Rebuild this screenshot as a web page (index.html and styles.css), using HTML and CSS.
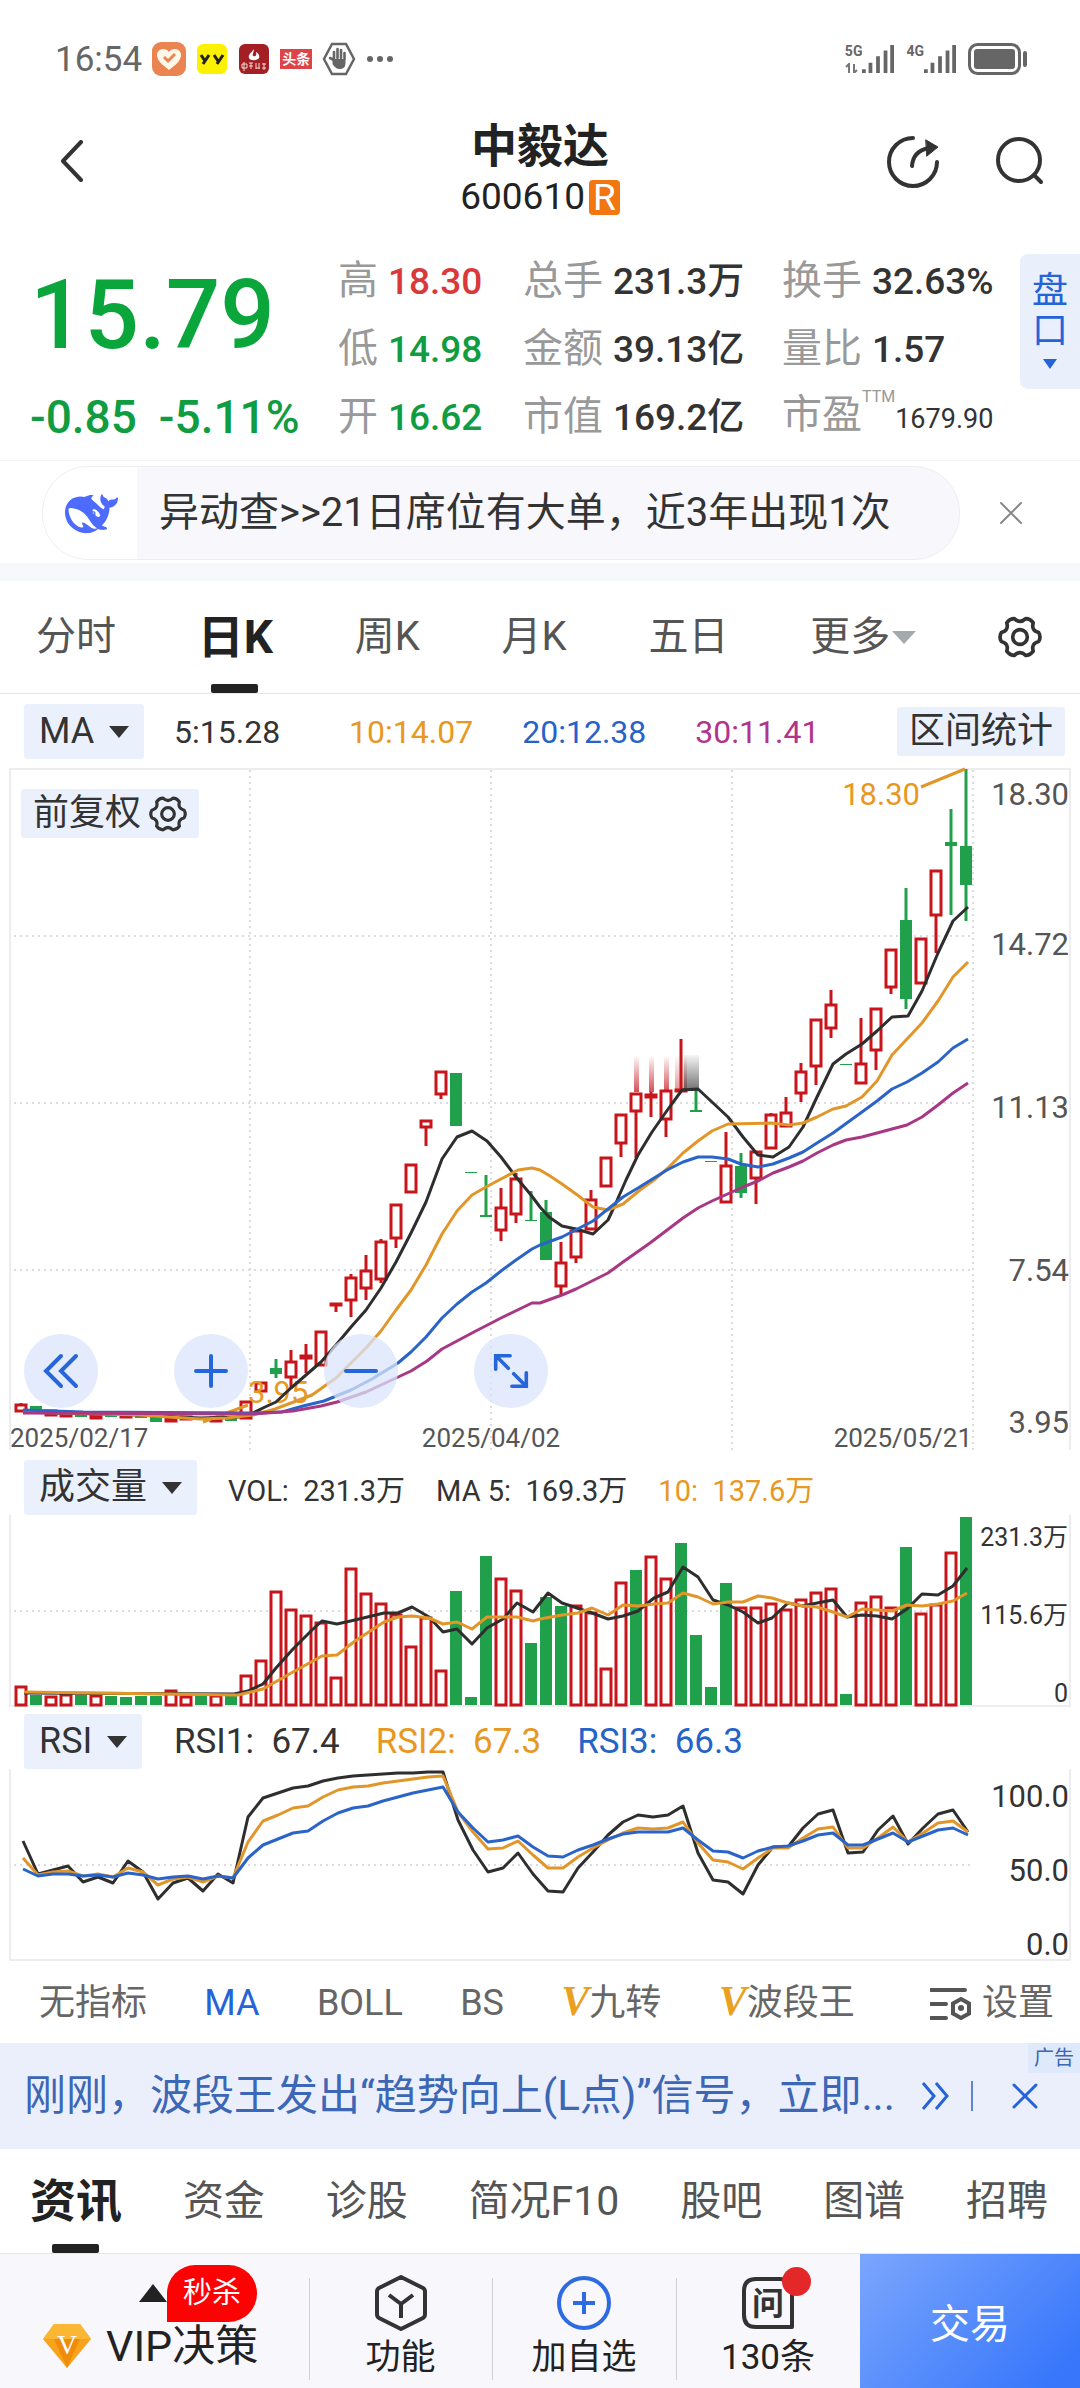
FILE: index.html
```html
<!DOCTYPE html>
<html lang="zh-CN">
<head>
  <meta charset="UTF-8" />
  <meta name="viewport" content="width=device-width, initial-scale=1.0"/>
  <title>中毅达 600610</title>
  <link rel="stylesheet" href="styles.css">
</head>
<body>
  <svg class="defs" aria-hidden="true">
    <symbol id="gear" viewBox="0 0 24 24">
      <path d="M22.2 9.6Q23.600 12 22.2 14.4Q18 15.500 19.2 19.7Q17.600 22 15.1 22Q12 19 8.9 22Q6.400 22 4.8 19.7Q6 15.500 1.8 14.4Q.4 12 1.8 9.6Q6 8.500 4.8 4.3Q6.400 2 8.9 2Q12 5 15.1 2Q17.600 2 19.2 4.3Q18 8.500 22.2 9.6Z"/>
      <circle cx="12" cy="12" r="4"/>
    </symbol>
  </svg>

  <div class="status-bar">
    <span class="clock">16:54</span>
    <svg class="app-icon" viewBox="0 0 34 34">
      <rect width="34" height="34" rx="9" fill="#ea8450"/>
      <path d="M17 28C9 22 5 18 5 13c0-7 9-8 12-3 3-5 12-4 12 3 0 5-4 9-12 15z" fill="#fff7ea"/>
      <path d="M12 15l4 4 7-7" fill="none" stroke="#ea8450" stroke-width="3"/>
    </svg>
    <svg class="app-icon small" viewBox="0 0 30 30">
      <rect width="30" height="30" rx="6" fill="#fdf000"/>
      <path d="M4 11l4 6M12 11l-6 9M17 11l4 6M26 11l-6 9" fill="none" stroke="#222" stroke-width="3"/>
    </svg>
    <svg class="app-icon small" viewBox="0 0 30 30">
      <rect width="30" height="30" rx="6" fill="#a31f24"/>
      <path d="M15 5c-4 5-6 6-5 9 1 3 8 3 10 0 1-3-1-5-3-6 1 4-1 5-3 4-1-2 1-4 1-7z" fill="#fff"/>
      <path d="M3 20h5v4H3zM5 18v9M10 19h4M10 22h4M12 19v6M17 19v6M20 19v6M17 24h4M23 20h4M23 24h4M25 19v7" fill="none" stroke="#f5d9d2" stroke-width="1"/>
    </svg>
    <span class="headline-icon">头条</span>
    <svg class="app-icon" viewBox="0 0 34 34" fill="none" stroke="#666">
      <path d="M10 2h14l8 15-8 15H10L2 17z" stroke-width="2.5"/>
      <path d="M12 18v-8M15.500 16V7M19 16V8M22.500 17v-6M12 18l-4-2" stroke-width="2.600" stroke-linecap="round"/>
      <path d="M10.500 17h13v4q0 6-6 6-4 0-7-5z" fill="#666" stroke="none"/>
    </svg>
    <svg class="more-dots" viewBox="0 0 28 8" fill="#666">
      <circle cx="4" cy="4" r="3"/><circle cx="14" cy="4" r="3"/><circle cx="24" cy="4" r="3"/>
    </svg>
    <div class="signals">
      <div class="signal">
        <span class="net">5G<svg viewBox="0 0 14 10"><path d="M1 4l3-3v9M9 1v9l3-3" fill="none" stroke="#777" stroke-width="2"/></svg></span>
        <svg class="bars" viewBox="0 0 34 32"><path d="M2 27v4M9 20v11M17 13v18M25 7v24M32 1v30"/></svg>
      </div>
      <div class="signal">
        <span class="net">4G</span>
        <svg class="bars" viewBox="0 0 34 32"><path d="M2 27v4M9 20v11M17 13v18M25 7v24M32 1v30"/></svg>
      </div>
      <svg class="battery" viewBox="0 0 60 32">
        <rect x="1.500" y="1.500" width="50" height="29" rx="8" fill="none" stroke="#666" stroke-width="3"/>
        <rect x="6" y="6" width="41" height="20" rx="3" fill="#666"/>
        <rect x="55" y="8" width="4" height="16" rx="2" fill="#666"/>
      </svg>
    </div>
  </div>

  <header class="header">
    <button class="icon-btn back" aria-label="返回">
      <svg viewBox="0 0 24 42"><path d="M21 2L3 21l18 19"/></svg>
    </button>
    <div class="title">
      <h1>中毅达</h1>
      <p>600610<span class="tag-r">R</span></p>
    </div>
    <div class="header-actions">
      <button class="icon-btn" aria-label="分享">
        <svg viewBox="0 0 54 54"><path d="M27 3A24 24 0 1 0 51 27M26 31q1-15 17-18"/><path d="M40 5l12 7-11 9z" fill="#333" stroke-width="1"/></svg>
      </button>
      <button class="icon-btn" aria-label="搜索">
        <svg viewBox="0 0 54 54"><circle cx="27" cy="25" r="21"/><path d="M42 40l7 7"/></svg>
      </button>
    </div>
  </header>

  <section class="quote">
    <div class="quote-grid">
      <div class="price">15.79</div>
      <div class="item">高 <b class="up">18.30</b></div>
      <div class="item">总手 <b>231.3万</b></div>
      <div class="item">换手 <b>32.63%</b></div>
      <div class="item">低 <b class="down">14.98</b></div>
      <div class="item">金额 <b>39.13亿</b></div>
      <div class="item">量比 <b>1.57</b></div>
      <div class="change"><span>-0.85</span><span>-5.11%</span></div>
      <div class="item">开 <b class="down">16.62</b></div>
      <div class="item">市值 <b>169.2亿</b></div>
      <div class="item pe">市盈<sup>TTM</sup><b>1679.90</b></div>
    </div>
    <button class="order-book">盘<br>口<i class="caret"></i></button>
  </section>

  <section class="notice">
    <a class="notice-pill" href="#">
      <span class="notice-logo">
        <svg viewBox="0 3 24 18"><path fill="#4d6bfe" d="M23.748 4.482c-.254-.124-.364.113-.512.234-.051.039-.094.09-.137.136-.372.397-.806.657-1.373.626-.829-.046-1.537.214-2.163.848-.133-.782-.575-1.248-1.247-1.548-.352-.156-.708-.311-.955-.65-.172-.241-.219-.51-.305-.774-.055-.16-.11-.323-.293-.35-.2-.031-.278.136-.356.276-.313.572-.434 1.202-.422 1.84.027 1.436.633 2.58 1.838 3.393.137.093.172.187.129.323-.082.28-.18.552-.266.833-.055.179-.137.217-.329.14a5.526 5.526 0 01-1.736-1.18c-.857-.828-1.631-1.742-2.597-2.458a11.365 11.365 0 00-.689-.471c-.985-.957.13-1.743.388-1.836.27-.098.093-.432-.779-.428-.872.004-1.67.295-2.687.684a3.055 3.055 0 01-.465.137 9.597 9.597 0 00-2.883-.102c-1.885.21-3.39 1.102-4.497 2.623C.082 8.606-.231 10.684.152 12.85c.403 2.284 1.569 4.175 3.36 5.653 1.858 1.533 3.997 2.284 6.438 2.14 1.482-.085 3.133-.284 4.994-1.86.47.234.962.327 1.78.397.63.059 1.236-.03 1.705-.128.735-.156.684-.837.419-.961-2.155-1.004-1.682-.595-2.113-.926 1.096-1.296 2.746-2.642 3.392-7.003.05-.347.007-.565 0-.845-.004-.17.035-.237.23-.256a4.173 4.173 0 001.545-.475c1.396-.763 1.96-2.015 2.093-3.517.02-.23-.004-.467-.247-.588zM11.581 18c-2.089-1.642-3.102-2.183-3.52-2.16-.392.024-.321.471-.235.763.09.288.207.486.371.739.114.167.192.416-.113.603-.673.416-1.842-.14-1.897-.167-1.361-.802-2.5-1.86-3.301-3.307-.774-1.393-1.224-2.887-1.298-4.482-.02-.386.093-.522.477-.592a4.696 4.696 0 011.529-.039c2.132.312 3.946 1.265 5.468 2.774.868.86 1.525 1.887 2.202 2.891.72 1.066 1.494 2.082 2.48 2.914.348.292.625.514.891.677-.802.09-2.14.11-3.054-.614zm1-6.44a.306.306 0 01.415-.287.302.302 0 01.2.288.306.306 0 01-.31.307.303.303 0 01-.304-.308zm3.11 1.596c-.2.081-.399.151-.59.16a1.245 1.245 0 01-.798-.254c-.274-.23-.47-.358-.552-.758a1.73 1.73 0 01.016-.588c.07-.327-.008-.537-.239-.727-.187-.156-.426-.199-.688-.199a.559.559 0 01-.254-.078c-.11-.114-.2-.391-.111-.549.028-.054.16-.186.192-.21.356-.202.767-.136 1.146.016.352.144.618.408 1.001.782.391.451.462.576.685.914.176.265.336.537.445.848.067.195-.019.354-.25.452z"/></svg>
      </span>
      <span class="notice-text">异动查&gt;&gt;21日席位有大单，近3年出现1次</span>
    </a>
    <button class="icon-btn notice-close" aria-label="关闭">
      <svg viewBox="0 0 22 22"><path d="M1 1l20 20M21 1L1 21"/></svg>
    </button>
  </section>

  <nav class="tabs period-tabs">
    <a href="#">分时</a>
    <a href="#" class="active">日K</a>
    <a href="#">周K</a>
    <a href="#">月K</a>
    <a href="#">五日</a>
    <button aria-haspopup="true">更多<i class="caret"></i></button>
    <button class="icon-btn" aria-label="图表设置"><svg class="gear"><use href="#gear"/></svg></button>
  </nav>

  <div class="pane-head main-head">
    <span class="picker"><select aria-label="主图指标"><option>MA</option></select></span>
    <div class="legend ma-legend">
      <span>5:15.28</span>
      <span class="orange">10:14.07</span>
      <span class="blue">20:12.38</span>
      <span class="purple">30:11.41</span>
    </div>
    <button class="chip">区间统计</button>
  </div>

  <div class="chart">
    <svg id="kline" viewBox="0 0 1080 682"></svg>
    <button class="chip adjust">前复权<svg class="gear"><use href="#gear"/></svg></button>
    <div class="chart-tools">
      <button aria-label="向左"><svg viewBox="0 0 36 36"><path d="M18 3L3 18l15 15M33 3L18 18l15 15"/></svg></button>
      <button aria-label="放大"><svg viewBox="0 0 36 36"><path d="M18 3v30M3 18h30"/></svg></button>
      <button aria-label="缩小"><svg viewBox="0 0 36 36"><path d="M3 18h30"/></svg></button>
      <button aria-label="全屏"><svg viewBox="0 0 40 40"><path d="M3 18V3h16M4 4l13 13M37 22v15H21M36 36L23 23"/></svg></button>
    </div>
  </div>

  <div class="pane-head">
    <span class="picker"><select aria-label="成交量指标"><option>成交量</option></select></span>
    <div class="legend vol-legend">
      <span>VOL:&nbsp; 231.3万</span>
      <span>MA 5:&nbsp; 169.3万</span>
      <span class="orange">10:&nbsp; 137.6万</span>
    </div>
  </div>
  <svg class="pane" id="volume" viewBox="0 0 1080 192"></svg>

  <div class="pane-head rsi-head">
    <span class="picker"><select aria-label="副图指标"><option>RSI</option></select></span>
    <div class="legend rsi-legend">
      <span>RSI1:&nbsp; 67.4</span>
      <span class="orange">RSI2:&nbsp; 67.3</span>
      <span class="blue">RSI3:&nbsp; 66.3</span>
    </div>
  </div>
  <svg class="pane" id="rsi" viewBox="0 0 1080 192"></svg>

  <nav class="indicators">
    <a href="#">无指标</a>
    <a href="#" class="active">MA</a>
    <a href="#">BOLL</a>
    <a href="#">BS</a>
    <a href="#"><i class="v">V</i>九转</a>
    <a href="#"><i class="v">V</i>波段王</a>
    <a href="#" class="settings">
      <svg viewBox="0 0 42 34"><path d="M1 3h34M1 17h15M1 31h15M31 12l8 4.500v10L31 31l-8-4.500v-10z"/><circle cx="31" cy="21" r="3" fill="#555" stroke="none"/></svg>设置
    </a>
  </nav>

  <aside class="ad">
    <a href="#">刚刚，波段王发出“趋势向上(L点)”信号，立即...</a>
    <svg class="ad-more" viewBox="0 0 28 30"><path d="M2 2l11 13L2 28M15 2l11 13-11 13"/></svg>
    <span class="ad-line"></span>
    <button class="icon-btn" aria-label="关闭广告"><svg viewBox="0 0 26 26"><path d="M2 2l22 22M24 2L2 24"/></svg></button>
    <span class="ad-tag">广告</span>
  </aside>

  <nav class="tabs info-tabs">
    <a href="#" class="active">资讯</a>
    <a href="#">资金</a>
    <a href="#">诊股</a>
    <a href="#">简况F10</a>
    <a href="#">股吧</a>
    <a href="#">图谱</a>
    <a href="#">招聘</a>
  </nav>

  <footer class="bottom-bar">
    <button class="vip">
      <span class="vip-top"><i class="caret"></i><span class="sale">秒杀</span></span>
      <span class="vip-main">
        <svg viewBox="0 0 50 46">
          <path d="M12 1h26l11 15-24 29L1 16z" fill="#f8a31c"/>
          <path d="M12 1h26l11 15H1z" fill="#fbb634"/>
          <path d="M25 45L12 16h26z" fill="#f08c0c"/>
          <text x="25" y="31" text-anchor="middle">V</text>
        </svg>VIP决策
      </span>
    </button>
    <button class="item-btn">
      <svg viewBox="0 0 54 58"><path d="M27 3l22 11q2 1 2 4v22q0 3-2 4L27 55 5 44q-2-1-2-4V18q0-3 2-4zM15 21l12 9 12-9M27 30v14"/></svg>
      功能
    </button>
    <button class="item-btn add">
      <svg viewBox="0 0 54 58"><circle cx="27" cy="29" r="25"/><path d="M27 18v22M16 29h22"/></svg>
      加自选
    </button>
    <button class="item-btn ask">
      <svg viewBox="0 0 54 58"><path d="M15 5h24q12 0 12 12v36H15Q3 53 3 41V17Q3 5 15 5z"/><text x="27" y="41" text-anchor="middle">问</text></svg>
      130条
    </button>
    <button class="trade">交易</button>
  </footer>

  <script src="chart.js"></script>
</body>
</html>
```
FILE: styles.css
```css
* {
  box-sizing: border-box;
}

body {
  margin: 0;
  background: #fff;
  color: #333;
  font-family: Roboto, "Noto Sans CJK SC", sans-serif;
  font-size: 40px;
}

h1, p {
  margin: 0;
}

a {
  color: inherit;
  text-decoration: none;
}

button, select {
  font: inherit;
  color: inherit;
  background: none;
  border: 0;
  margin: 0;
  padding: 0;
  cursor: pointer;
}

svg {
  display: block;
}

.defs {
  width: 0;
  height: 0;
  position: absolute;
}

.orange { color: #e8981f; }
.blue { color: #2563c9; }
.purple { color: #b3328c; }
.up { color: #d9393a; }
.down { color: #109c40; }

.caret {
  display: inline-block;
  border: 9px solid transparent;
  border-top: 12px solid currentColor;
  border-bottom: 0;
}

.icon-btn svg {
  fill: none;
  stroke: #333;
  stroke-width: 4;
  stroke-linecap: round;
  stroke-linejoin: round;
}

.gear {
  fill: none;
  stroke: #333;
  stroke-width: 2;
  stroke-linejoin: round;
}

/* status bar */
.status-bar {
  display: flex;
  align-items: center;
  gap: 10px;
  padding: 39px 52px 0 55px;
  height: 79px;
  color: #666;
}

.clock {
  font-size: 35px;
}

.app-icon {
  width: 34px;
  height: 34px;
}

.app-icon.small {
  width: 32px;
  height: 30px;
}

.headline-icon {
  background: #dd4347;
  color: #fff;
  font-size: 14px;
  font-weight: bold;
  line-height: 20px;
  padding: 0 2px;
}

.more-dots {
  width: 28px;
  height: 8px;
}

.signals {
  display: flex;
  align-items: center;
  gap: 12px;
  margin-left: auto;
}

.signal {
  display: flex;
}

.net {
  font-size: 14px;
  font-weight: bold;
  line-height: 16px;
}

.net svg {
  width: 14px;
  height: 10px;
  margin-top: 4px;
}

.bars {
  width: 32px;
  height: 32px;
  stroke: #666;
  stroke-width: 4;
}

.battery {
  width: 60px;
  height: 32px;
}

/* header */
.header {
  display: grid;
  grid-template-columns: 1fr auto 1fr;
  align-items: start;
  padding: 40px 34px 30px 60px;
}

.back {
  justify-self: start;
  padding-top: 21px;
}

.back svg {
  width: 24px;
  height: 42px;
}

.title {
  text-align: center;
  color: #222;
  padding-right: 26px;
}

.title h1 {
  font-size: 46px;
  line-height: 54px;
}

.title p {
  display: flex;
  justify-content: center;
  align-items: center;
  gap: 4px;
  font-size: 37px;
  line-height: 40px;
  margin-top: 4px;
}

.tag-r {
  background: #f27710;
  color: #fff;
  border-radius: 4px;
  line-height: 35px;
  padding: 0 4px;
}

.header-actions {
  display: flex;
  justify-content: flex-end;
  gap: 52px;
  padding-top: 16px;
}

.header-actions svg {
  width: 54px;
  height: 54px;
}

/* quote */
.quote {
  display: flex;
  align-items: flex-start;
  padding-bottom: 9px;
}

.quote-grid {
  flex: 1;
  display: grid;
  grid-template-columns: 308fr 185fr 259fr 238fr;
  grid-auto-rows: 68px;
  align-items: center;
  padding-left: 30px;
}

.price {
  grid-row: span 2;
  color: #0aa63c;
  font-size: 96px;
  font-weight: 500;
}

.change {
  display: flex;
  gap: 22px;
  color: #109c40;
  font-size: 46px;
  font-weight: 500;
}

.item {
  color: #999;
  line-height: 48px;
  white-space: nowrap;
}

.item b {
  color: #333;
  font-size: 37px;
  font-weight: 500;
}

.item b.up { color: #d9393a; }
.item b.down { color: #109c40; }

.pe sup {
  font-size: 16px;
  line-height: 0;
  vertical-align: 26px;
}

.item.pe b {
  font-size: 27px;
  font-weight: 400;
}

.order-book {
  width: 60px;
  margin-top: 7px;
  padding: 17px 0 20px;
  background: #e9f0fc;
  color: #2563d9;
  font-size: 36px;
  line-height: 40px;
  border-radius: 8px 0 0 8px;
}

.order-book .caret {
  display: block;
  width: 0;
  margin: 8px auto 0;
  border-width: 10px 7px 0;
}

/* notice */
.notice {
  display: flex;
  align-items: center;
  padding: 5px 58px 3px 42px;
  border-top: 1px solid #f4f4f7;
  border-bottom: 18px solid #f7f8fc;
}

.notice-pill {
  flex: 1;
  display: flex;
  align-items: center;
  border: 1px solid #ededf3;
  border-radius: 46px;
  background: #f7f7fc;
  overflow: hidden;
  margin-right: 40px;
}

.notice-logo {
  background: #fff;
  padding: 27px 19px 25px 22px;
}

.notice-logo svg {
  width: 53px;
  height: 40px;
}

.notice-text {
  padding-left: 22px;
  font-size: 40px;
  line-height: 46px;
}

.notice-close svg {
  width: 22px;
  height: 22px;
  stroke: #888;
  stroke-width: 2;
}

/* tabs */
.tabs {
  display: flex;
  justify-content: space-between;
  align-items: center;
  color: #555;
  border-bottom: 1px solid #e6e6e6;
}

.tabs .active {
  position: relative;
  color: #222;
  font-size: 46px;
  font-weight: bold;
}

.tabs .active::after {
  content: "";
  position: absolute;
  left: 50%;
  bottom: 0;
  width: 47px;
  height: 9px;
  margin-left: -24px;
  border-radius: 2px;
  background: #222;
}

.period-tabs {
  padding: 0 38px 0 36px;
  line-height: 112px;
}

.period-tabs .caret {
  color: #a4a9ad;
  margin-left: 2px;
  margin-bottom: 6px;
  border-width: 13px 12px 0;
}

.period-tabs .gear {
  width: 44px;
  height: 44px;
  stroke-width: 2;
}

/* chart panes */
.pane-head {
  display: flex;
  align-items: center;
  padding: 10px 15px 0 24px;
}

.main-head {
  padding-bottom: 9px;
}

.rsi-head {
  padding-top: 7px;
}

.picker {
  position: relative;
  background: #eaf1fd;
  border-radius: 3px;
}

.picker::after {
  content: "";
  position: absolute;
  right: 15px;
  top: 22px;
  border: 10px solid transparent;
  border-top: 12px solid #333;
  border-bottom: 0;
  pointer-events: none;
}

.picker select {
  display: block;
  appearance: none;
  font-size: 36px;
  line-height: 55px;
  height: 55px;
  padding: 0 49px 0 15px;
}

.legend {
  display: flex;
  white-space: nowrap;
}

.ma-legend {
  flex: 1;
  margin-left: 30px;
  font-size: 32px;
  gap: 49px;
}

.ma-legend span:first-child {
  margin-right: 20px;
}

.vol-legend {
  margin-left: 31px;
  font-size: 29px;
  gap: 31px;
}

.rsi-legend {
  margin-left: 32px;
  font-size: 35px;
  gap: 36px;
}

.chip {
  background: #eaf1fd;
  border-radius: 3px;
  font-size: 36px;
  line-height: 49px;
  padding: 0 12px;
}

.chart {
  position: relative;
}

.chart > svg, .pane {
  width: 100%;
  height: auto;
  overflow: visible;
}

.adjust {
  position: absolute;
  left: 21px;
  top: 21px;
  display: flex;
  align-items: center;
  gap: 8px;
}

.adjust .gear {
  width: 38px;
  height: 38px;
}

.chart-tools {
  position: absolute;
  left: 24px;
  bottom: 42px;
  display: flex;
  gap: 76px;
}

.chart-tools button {
  display: grid;
  place-items: center;
  width: 74px;
  height: 74px;
  border-radius: 50%;
  background: rgba(217, 228, 251, 0.75);
}

.chart-tools svg {
  width: 36px;
  height: 36px;
  fill: none;
  stroke: #2765da;
  stroke-width: 4;
  stroke-linecap: round;
}

/* svg parts, classes are set in chart.js */
.frame { fill: none; stroke: #ededf0; stroke-width: 2; }
.grid { stroke: #dcdce0; stroke-width: 2; stroke-dasharray: 2 4; }
.rise { fill: #fff; stroke: #c8141b; stroke-width: 3; }
.fall { fill: #20a04b; stroke: none; }
.wick-rise { stroke: #c8141b; stroke-width: 3; }
.wick-fall { stroke: #20a04b; stroke-width: 3; }
.line { fill: none; stroke-width: 3; stroke-linejoin: round; }
.line-black { stroke: #2e2e2e; }
.line-orange { stroke: #e2962a; }
.line-blue { stroke: #2a64c8; }
.line-purple { stroke: #a83784; }
.axis { fill: #555; font-size: 31px; }
.axis-dark { fill: #333; font-size: 31px; }
.axis-small { fill: #333; font-size: 25px; }
.date { fill: #555; font-size: 26px; }
.mark { fill: #e8981f; font-size: 31px; }

/* indicators */
.indicators {
  display: flex;
  justify-content: space-between;
  align-items: center;
  padding: 3px 26px 0 39px;
  font-size: 36px;
  line-height: 79px;
  color: #666;
}

.indicators .active {
  color: #2563d9;
}

.v {
  color: #e9a11f;
  font-family: "Liberation Serif", serif;
  font-size: 42px;
  font-weight: bold;
  line-height: 40px;
}

.settings {
  display: flex;
  align-items: center;
  gap: 10px;
  margin-left: 18px;
}

.settings svg {
  width: 42px;
  height: 34px;
  fill: none;
  stroke: #555;
  stroke-width: 4;
  stroke-linecap: round;
}

/* ad */
.ad {
  position: relative;
  display: flex;
  align-items: center;
  padding: 0 42px 0 24px;
  background: #ebeffb;
  color: #3c66b6;
  line-height: 106px;
  font-size: 42px;
}

.ad a {
  flex: 1;
  overflow: hidden;
  white-space: nowrap;
}

.ad svg {
  fill: none;
  stroke: #2563d9;
  stroke-width: 3;
}

.ad-more {
  width: 28px;
  height: 30px;
}

.ad-line {
  width: 2px;
  height: 30px;
  margin: 0 39px 0 22px;
  background: #5f84d0;
}

.ad .icon-btn svg {
  width: 26px;
  height: 26px;
}

.ad-tag {
  position: absolute;
  right: 0;
  top: 0;
  padding: 0 6px;
  background: #dfe9fc;
  font-size: 20px;
  line-height: 30px;
}

.info-tabs {
  padding: 0 32px 0 30px;
  font-size: 41px;
  line-height: 104px;
}

/* bottom bar */
.bottom-bar {
  display: grid;
  grid-template-columns: 309fr 183fr 184fr 184fr 220fr;
  background: #f7f7fc;
  color: #222;
}

.vip {
  padding: 10px 0 18px 42px;
}

.vip-top {
  display: flex;
  align-items: center;
  padding-left: 97px;
}

.vip-top .caret {
  border-width: 0 14px 18px;
  border-bottom: 18px solid #222;
}

.sale {
  background: #fc0203;
  color: #fff;
  font-size: 29px;
  line-height: 57px;
  padding: 0 16px;
  border-radius: 29px 29px 29px 0;
}

.vip-main {
  display: flex;
  align-items: center;
  gap: 14px;
  font-size: 43px;
  line-height: 48px;
}

.vip-main svg {
  width: 50px;
  height: 46px;
  fill: #fff;
  font-family: "Liberation Serif", serif;
  font-size: 28px;
}

.item-btn {
  position: relative;
  padding: 20px 0 6px;
  font-size: 35px;
  line-height: 48px;
}

.item-btn::before {
  content: "";
  position: absolute;
  left: 0;
  top: 24px;
  bottom: 8px;
  border-left: 1px solid #d0d0d6;
}

.item-btn svg {
  width: 54px;
  height: 58px;
  margin: 0 auto 2px;
  fill: none;
  stroke: #333;
  stroke-width: 4;
  stroke-linejoin: round;
}

.item-btn.add svg {
  stroke: #2e6be0;
}

.item-btn text {
  fill: #333;
  stroke: none;
  font-size: 32px;
  font-weight: bold;
}

.ask::after {
  content: "";
  position: absolute;
  top: 13px;
  left: 50%;
  margin-left: 14px;
  width: 29px;
  height: 29px;
  border-radius: 50%;
  background: #e42728;
}

.trade {
  color: #fff;
  background: linear-gradient(135deg, #7ba6fd, #3877fb 90%);
}
```
FILE: chart.js
```js
const STEP = 15;
const X0 = 21;

// [rise or fall, high, body top, body bottom, low]
const candles = [
  ["r",635,637,643,643],["f",638,638,643,643],["r",643,643,647,647],["r",643,644,648,648],
  ["f",645,645,649,649],["r",646,647,650,650],["f",645,645,649,649],["r",646,647,649,649],
  ["f",646,646,650,650],["f",648,648,654,654],["r",649,650,653,653],["r",649,649,651,651],
  ["f",649,649,652,652],["r",650,650,653,653],["f",649,649,653,653],["r",633,634,650,651],
  ["r",614,615,623,624],["f",591,600,606,610],["r",582,594,609,620],["r",576,588,590,605],
  ["r",563,564,597,597],["r",535,536,537,544],["r",506,510,532,549],["r",487,503,520,532],
  ["r",471,474,511,515],["r",436,437,470,480],["r",396,397,424,425],["r",352,353,359,378],
  ["r",303,304,326,331],["f",305,305,358,358],["f",405,404,405,405],["f",407,447,449,449],
  ["r",420,440,462,473],["r",405,411,446,455],["f",423,452,453,453],["f",432,444,492,492],
  ["r",474,495,518,527],["r",462,463,489,495],["r",422,432,461,462],["r",389,390,418,419],
  ["r",346,347,375,389],["r",325,326,343,390],["r",324,327,329,349],["r",322,323,351,369],
  ["r",271,322,323,323],["f",322,342,344,344],["f",394,393,394,394],["r",364,398,434,434],
  ["f",385,398,425,430],["r",383,384,410,436],["r",345,347,380,380],["r",329,345,358,358],
  ["r",295,304,325,334],["r",251,252,298,317],["r",222,237,260,270],["f",296,296,297,297],
  ["r",250,296,315,316],["r",240,241,282,302],["r",181,182,219,226],["f",120,152,231,241],
  ["r",170,171,215,215],["r",102,103,147,185],["f",41,74,78,147],["f",1,78,117,153]
];

const ma5 = "23,644 138,647 200,650 238,649 253,645 265,639 276,634 291,620 306,607 321,594 336,577 351,559 366,542 381,520 396,494 411,465 426,434 442,391 457,369 472,363 487,373 501,389 516,409 531,427 540,439 549,449 562,458 576,461 593,466 608,452 615,437 626,412 638,387 652,364 666,344 682,322 698,321 712,334 728,349 743,369 758,387 773,389 789,379 803,359 817,329 833,296 846,286 862,276 877,263 892,249 908,248 922,223 938,185 953,153 968,139";
const ma10 = "23,644 138,647 200,651 227,650 253,647 275,641 291,635 312,627 336,610 351,595 366,580 381,563 396,542 411,522 426,497 442,466 457,443 472,427 486,419 501,411 518,402 532,400 540,402 550,408 562,416 576,426 593,439 608,442 623,436 640,422 654,412 668,400 683,385 698,373 712,363 728,356 771,355 789,357 803,355 817,349 833,341 846,338 862,329 877,313 892,287 907,271 922,255 938,233 953,209 968,194";
const ma20 = "23,642 83,644 253,645 282,644 303,638 324,633 351,622 372,611 398,595 411,584 426,569 442,550 457,536 472,524 486,515 501,503 516,492 532,481 540,477 562,469 593,453 608,441 623,429 638,420 667,402 683,394 698,389 712,389 728,391 741,396 758,399 773,396 789,390 803,384 817,375 833,365 862,344 877,333 892,321 907,314 922,305 938,294 953,280 968,271";
const ma30 = "23,645 253,646 293,643 321,638 337,634 366,624 396,610 411,603 427,593 442,581 472,565 501,550 532,535 540,535 562,527 576,521 608,505 623,494 650,475 683,450 698,440 712,433 743,419 758,413 773,405 789,399 803,393 817,385 833,377 846,372 862,369 892,361 907,357 922,349 938,337 953,325 968,315";

const volTops = [172,180,182,180,180,181,181,182,181,181,176,182,181,181,181,161,146,77,95,101,108,163,54,79,89,100,132,103,156,76,182,41,64,76,128,82,91,91,98,154,68,55,42,64,28,120,172,68,93,93,89,95,85,78,74,179,88,82,93,32,99,90,38,2];
const volKinds = "rfrrfrffffrrfrfrrrrrrrrrrrrrrfffrrfffrrrrfrrffffrrrrrrrfrrrfrrrf";
const vol5 = "24,178 234,179 248,176 263,169 276,153 293,134 312,115 322,106 337,109 355,105 384,98 398,98 412,92 429,102 443,117 457,114 472,129 487,113 503,104 517,88 533,97 548,78 562,88 592,98 608,104 623,101 638,96 654,83 668,77 683,52 698,62 713,85 728,90 743,97 758,108 772,103 788,88 803,91 817,88 833,85 847,102 862,100 877,101 892,104 907,94 922,79 938,80 953,71 967,53";
const vol10 = "24,177 238,180 263,174 293,157 322,141 337,140 355,126 384,107 398,102 412,101 429,103 443,109 457,107 472,114 487,102 517,102 533,106 540,104 562,100 578,98 592,93 608,100 623,90 638,91 654,89 668,88 683,78 698,82 713,89 728,87 743,87 758,81 772,83 788,88 803,91 817,92 833,97 847,102 862,94 892,96 907,90 922,91 938,89 953,86 967,78";

const rsi1 = [72,105,101,97,113,108,114,92,103,130,114,109,122,105,114,48,29,24,19,17,12,9,7,6,5,4,4,3,3,51,81,103,99,84,105,122,123,99,83,66,53,46,48,46,37,84,111,113,125,96,78,78,59,45,41,84,83,61,47,75,59,45,41,63];
const rsi2 = [89,106,103,102,107,105,108,99,103,116,110,108,113,107,109,73,52,46,39,37,28,21,18,17,14,12,10,8,7,43,63,80,79,72,86,99,99,88,79,71,64,59,60,59,53,74,91,93,100,89,79,79,69,60,58,79,79,69,58,73,64,54,52,63];
const rsi3 = [100,107,105,105,107,106,108,104,106,110,108,107,110,107,109,89,76,70,64,62,52,44,39,37,32,28,24,21,18,43,59,73,71,67,78,87,88,81,76,70,65,63,63,63,59,71,82,83,89,82,78,77,72,66,64,76,76,70,64,73,67,61,59,66];

function line(x1, y1, x2, y2, cls) {
  return `<line class="${cls}" x1="${x1}" y1="${y1}" x2="${x2}" y2="${y2}"/>`;
}

function bar(kind, x, top, bottom) {
  if (kind === "r") {
    return `<rect class="rise" x="${x - 5}" y="${top}" width="10" height="${Math.max(bottom - top, 1)}"/>`;
  }
  return `<rect class="fall" x="${x - 6}" y="${top}" width="12" height="${Math.max(bottom - top, 1)}"/>`;
}

function curve(points, color) {
  return `<polyline class="line line-${color}" points="${points}"/>`;
}

function series(values) {
  return values.map((y, i) => (X0 + 2 + i * STEP) + "," + y).join(" ");
}

function label(x, y, text, cls, anchor) {
  return `<text class="${cls}" x="${x}" y="${y}" text-anchor="${anchor || "end"}">${text}</text>`;
}

function drawKline() {
  let s = `<path class="frame" d="M10 682V1H1070V682"/>`;
  [250, 491, 732, 973].forEach(x => s += line(x, 2, x, 682, "grid"));
  [168, 335, 502].forEach(y => s += line(14, y, 973, y, "grid"));

  candles.forEach((c, i) => {
    const x = X0 + i * STEP;
    const [kind, high, top, bottom, low] = c;
    const wick = kind === "r" ? "wick-rise" : "wick-fall";
    if (high < top) s += line(x, high, x, top, wick);
    if (low > bottom) s += line(x, bottom, x, low, wick);
    s += bar(kind, x, top, bottom);
  });

  // faded highs around the April peak
  s += `<defs>
    <linearGradient id="fadeRed" x1="0" y1="0" x2="0" y2="1"><stop offset="0" stop-color="#c8141b" stop-opacity="0"/><stop offset="1" stop-color="#c8141b" stop-opacity=".75"/></linearGradient>
    <linearGradient id="fadeDark" x1="0" y1="0" x2="0" y2="1"><stop offset="0" stop-color="#333" stop-opacity=".05"/><stop offset="1" stop-color="#333" stop-opacity=".7"/></linearGradient>
  </defs>`;
  [634, 649, 664].forEach(x => s += `<rect x="${x}" y="287" width="5" height="37" fill="url(#fadeRed)"/>`);
  s += `<rect x="675" y="287" width="12" height="36" fill="url(#fadeRed)" opacity=".6"/>`;
  s += `<rect x="684" y="287" width="15" height="36" fill="url(#fadeDark)"/>`;

  s += label(248, 635, "3.95", "mark", "start");
  s += line(203, 654, 248, 637, "line line-orange");
  s += curve(ma5, "black") + curve(ma10, "orange") + curve(ma20, "blue") + curve(ma30, "purple");
  s += line(921, 19, 965, 1, "line line-orange");
  s += label(920, 37, "18.30", "mark");
  s += label(1069, 37, "18.30", "axis");
  s += label(1069, 187, "14.72", "axis");
  s += label(1069, 350, "11.13", "axis");
  s += label(1069, 513, "7.54", "axis");
  s += label(1069, 665, "3.95", "axis");
  s += label(10, 679, "2025/02/17", "date", "start");
  s += label(491, 679, "2025/04/02", "date", "middle");
  s += label(972, 679, "2025/05/21", "date");
  document.getElementById("kline").innerHTML = s;
}

function drawVolume() {
  let s = `<path class="frame" d="M10 0V191H1070V0"/>` + line(14, 96, 973, 96, "grid");
  volTops.forEach((top, i) => s += bar(volKinds[i], X0 + i * STEP, top, 190));
  s += curve(vol5, "black") + curve(vol10, "orange");
  s += label(1068, 31, "231.3万", "axis-small");
  s += label(1068, 109, "115.6万", "axis-small");
  s += label(1068, 187, "0", "axis-small");
  document.getElementById("volume").innerHTML = s;
}

function drawRsi() {
  let s = `<path class="frame" d="M10 0V191H1070V0"/>` + line(14, 96, 973, 96, "grid");
  s += curve(series(rsi1), "black") + curve(series(rsi2), "orange") + curve(series(rsi3), "blue");
  s += label(1069, 38, "100.0", "axis-dark");
  s += label(1069, 112, "50.0", "axis-dark");
  s += label(1069, 186, "0.0", "axis-dark");
  document.getElementById("rsi").innerHTML = s;
}

drawKline();
drawVolume();
drawRsi();
```
